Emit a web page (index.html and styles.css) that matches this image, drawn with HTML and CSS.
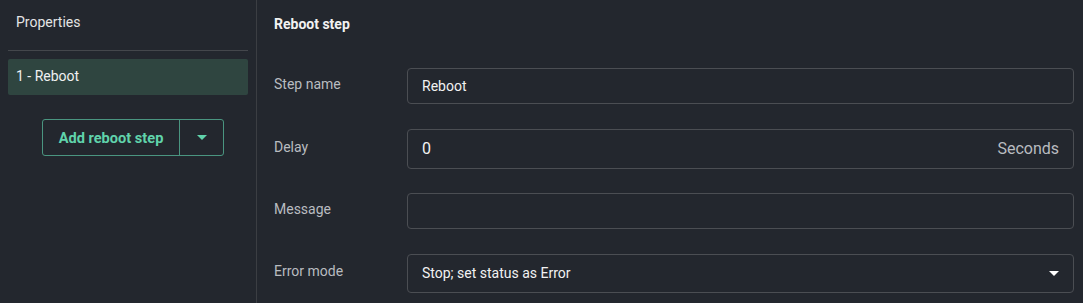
FILE: index.html
```html
<!DOCTYPE html>
<html lang="en">
<head>
    <meta charset="UTF-8">
    <title>Reboot step</title>
    <link rel="stylesheet" href="styles.css">
</head>
<body>
    <div class="layout">
        <div class="sidebar">
            <div class="sidebar-title">Properties</div>
            <div class="step-item">1 - Reboot</div>
            <div class="add-row">
                <div class="split-btn">
                    <button class="btn-main">Add reboot step</button>
                    <button class="btn-caret">
                        <svg width="10" height="5" viewBox="0 0 10 5"><path d="M0 0h10L5 5z" fill="currentColor"/></svg>
                    </button>
                </div>
            </div>
        </div>

        <div class="content">
            <h3>Reboot step</h3>

            <div class="field">
                <label>Step name</label>
                <div class="input-box">Reboot</div>
            </div>

            <div class="field field-tall">
                <label>Delay</label>
                <div class="input-box input-lg">
                    <span>0</span>
                    <span class="suffix">Seconds</span>
                </div>
            </div>

            <div class="field">
                <label>Message</label>
                <div class="input-box"></div>
            </div>

            <div class="field">
                <label>Error mode</label>
                <div class="input-box input-select">
                    <span>Stop; set status as Error</span>
                    <svg width="10" height="5" viewBox="0 0 10 5"><path d="M0 0h10L5 5z" fill="#fff"/></svg>
                </div>
            </div>
        </div>
    </div>
</body>
</html>
```

FILE: styles.css
```css
body {
    margin: 0;
    background-color: #23272e;
    font-family: Roboto, 'Liberation Sans', sans-serif;
    color: #e6e6e6;
    font-size: 14px;
}
.layout {
    display: flex;
    height: 303px;
}
.sidebar {
    width: 257px;
    border-right: 1px solid #3b3e43;
    padding: 0 8px;
    box-sizing: border-box;
}
.sidebar-title {
    height: 50px;
    line-height: 45px;
    padding-left: 8px;
    border-bottom: 1px solid #44474c;
    color: #e4e4e4;
}
.step-item {
    margin-top: 8px;
    height: 36px;
    line-height: 35px;
    padding-left: 8px;
    background-color: #2f4540;
    border-radius: 2px;
    color: #f0f0f0;
}
.add-row {
    display: flex;
    padding-left: 34px;
    margin-top: 24px;
}
.split-btn {
    display: flex;
    height: 37px;
    border: 1px solid #4a9580;
    border-radius: 3px;
    box-sizing: border-box;
}
button {
    background: none;
    border: none;
    padding: 0;
    font-family: inherit;
    cursor: pointer;
}
.btn-main {
    width: 137px;
    color: #60d3ab;
    font-size: 14.6px;
    font-weight: 700;
    border-right: 1px solid #4a9580;
}
.btn-caret {
    width: 43px;
    color: #60d3ab;
    display: flex;
    align-items: center;
    justify-content: center;
}
.content {
    flex: 1;
    padding: 0 9px 0 17px;
}
h3 {
    margin: 0 0 9px;
    height: 46px;
    line-height: 48px;
    font-size: 14px;
    font-weight: 700;
    color: #f2f2f2;
}
.field {
    display: flex;
    align-items: center;
    height: 62px;
}
.field-tall {
    height: 63px;
}
label {
    width: 133px;
    color: #b9bcc0;
    font-size: 14px;
    margin-top: -4px;
}
.input-box {
    flex: 1;
    height: 36px;
    border: 1px solid #4b4e53;
    border-radius: 4px;
    box-sizing: border-box;
    padding: 0 14px;
    display: flex;
    align-items: center;
    justify-content: space-between;
    color: #f2f2f2;
}
.input-lg {
    height: 40px;
    font-size: 16px;
}
.suffix {
    color: #b9bcc0;
}
.input-select {
    height: 39px;
}
```
